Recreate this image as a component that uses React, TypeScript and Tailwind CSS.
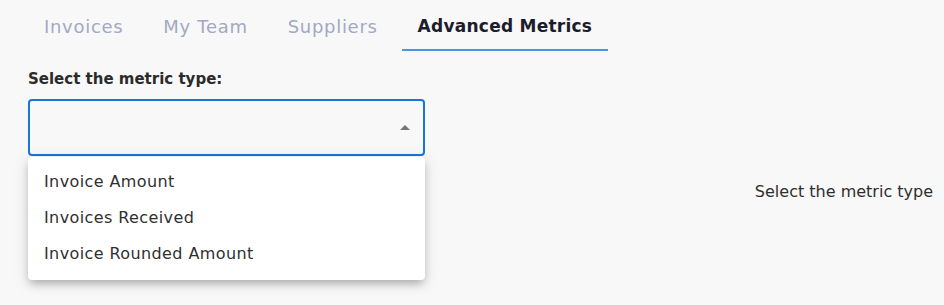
import React from "react";

const tabs = ["Invoices", "My Team", "Suppliers", "Advanced Metrics"];
const options = ["Invoice Amount", "Invoices Received", "Invoice Rounded Amount"];

export default function App() {
  return (
    <div
      className="w-[944px] h-[305px] bg-[#f8f8f8] overflow-hidden text-[#2f2f2f]"
      style={{ fontFamily: "'DejaVu Sans', Inter, sans-serif" }}
    >
      <div className="flex gap-2 pl-7">
        {tabs.map((t, i) => {
          const active = i === tabs.length - 1;
          return (
            <div
              key={t}
              className={`px-4 h-[51px] flex items-center pt-[4px] border-b-2 ${
                active
                  ? "text-[17px] font-semibold text-[#1c1c2c] border-[#4299e1] tracking-[0.25px]"
                  : "text-[18px] text-[#a3a8c3] border-transparent tracking-[0.7px]"
              }`}
            >
              {t}
            </div>
          );
        })}
      </div>
      <div className="flex pl-7 pr-[11px]">
        <div className="w-[397px] flex flex-col">
          <div className="mt-[18px] text-[15px] font-semibold text-[#2b2b2b] leading-5">
            Select the metric type:
          </div>
          <div className="relative mt-[10px]">
            <div className="h-[57px] border-2 border-[#1976d2] rounded flex items-center justify-end pr-[13px]">
              <svg width="10" height="5" viewBox="0 0 10 5">
                <path d="M0 5 L5 0 L10 5 Z" fill="#757575" />
              </svg>
            </div>
            <div className="absolute left-0 right-0 top-[58px] bg-white rounded shadow-[0_5px_8px_-2px_rgba(0,0,0,0.25),0_3px_14px_2px_rgba(0,0,0,0.10)] pt-[7px] pb-[8px]">
              {options.map((o) => (
                <div
                  key={o}
                  className="h-[36px] flex items-center px-4 text-[16px] text-[#2f2f2f] tracking-[0.4px]"
                >
                  {o}
                </div>
              ))}
            </div>
          </div>
        </div>
        <div className="flex-1 flex justify-end">
          <div className="mt-[131px] text-[16px] text-[#2f2f2f] h-5 leading-5">
            Select the metric type
          </div>
        </div>
      </div>
    </div>
  );
}
